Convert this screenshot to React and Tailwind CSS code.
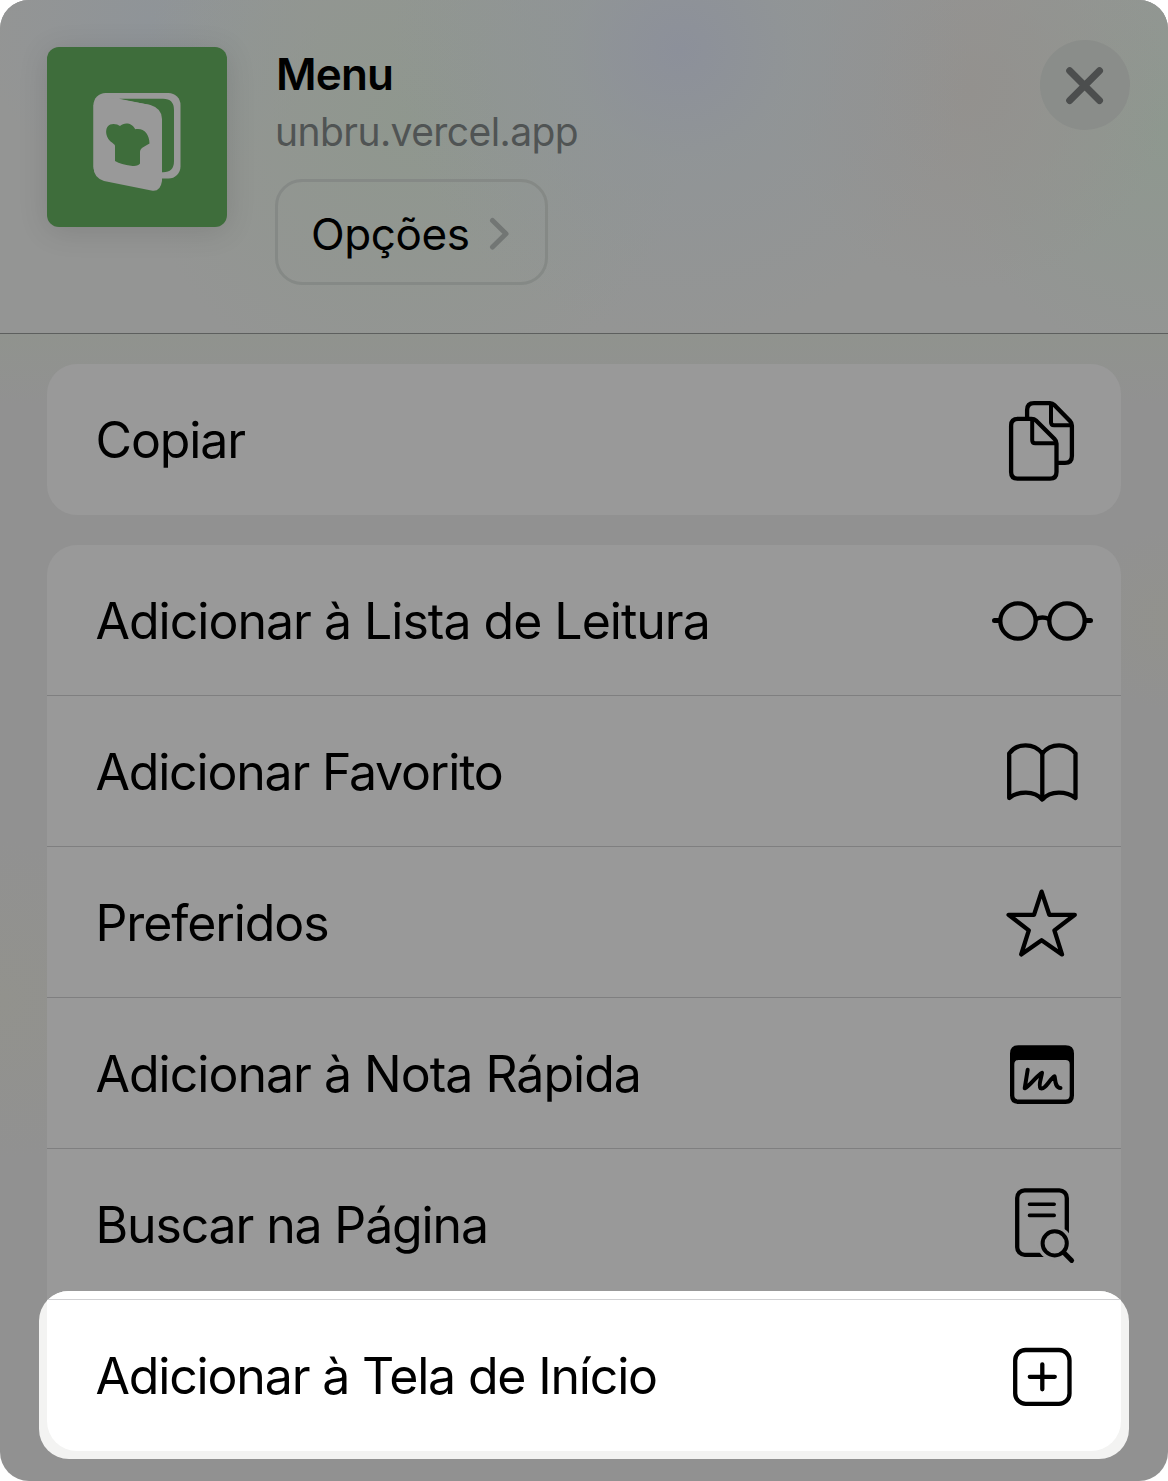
const Icon = ({ top, children }) => (
  <svg
    className="h-[150px] w-[104px] shrink-0"
    viewBox={`990 ${top} 104 150`}
    fill="none"
    stroke="#000"
    strokeWidth="4.3"
    strokeLinecap="round"
    strokeLinejoin="round"
  >
    {children}
  </svg>
);

const CopyIcon = () => (
  <Icon top={364}>
    <g strokeLinecap="butt">
      <path d="M1027.1 417V410Q1027.1 403.1 1034 403.1H1050Q1052.5 403.1 1054.3 405L1070 421Q1071.9 423 1071.9 425.5V456Q1071.9 462.9 1065 462.9H1058" />
      <path d="M1051 404V422.3Q1051 425.3 1054 425.3H1071" strokeWidth="4" />
      <path d="M1018 418.8H1031.5Q1034.2 418.8 1036 420.6L1054.5 439Q1056.5 441 1056.5 443.5V472Q1056.5 478.6 1050 478.6H1017.6Q1011.1 478.6 1011.1 472V425.5Q1011.1 418.8 1018 418.8Z" />
      <path d="M1032.2 420V440.3Q1032.2 443.3 1035.2 443.3H1056" strokeWidth="4" />
    </g>
  </Icon>
);

const GlassesIcon = () => (
  <Icon top={545}>
    <circle cx="1018" cy="621" r="17.7" />
    <circle cx="1067" cy="621" r="17.7" />
    <path d="M1036 619Q1042.5 616 1049 619" />
    <path d="M994.5 620.4H999M1086.5 620.4H1090.5" strokeWidth="5" />
  </Icon>
);

const BookIcon = () => (
  <Icon top={696}>
    <path d="M1042.3 753.5C1034 742.6 1017 742.6 1009.2 753.5V798C1018 791 1034 790 1042.3 799.5C1050.6 790 1066.6 791 1075.5 798V753.5C1067.6 742.6 1050.6 742.6 1042.3 753.5Z" />
    <path d="M1042.3 753V799" />
  </Icon>
);

const StarIcon = () => (
  <Icon top={847}>
    <path d="M1041.6 891.6L1049.3 914.8H1074.8L1054.4 930.4L1062 954.4L1041.6 940.3L1021.2 954.4L1028.8 930.4L1008.6 914.8H1034Z" />
  </Icon>
);

const NoteIcon = () => (
  <Icon top={998}>
    <path
      fill="#000"
      stroke="none"
      fillRule="evenodd"
      d="M1018.5 1045.3H1065.5Q1074 1045.3 1074 1053.5V1095.5Q1074 1104 1065.5 1104H1018.5Q1010 1104 1010 1095.5V1053.5Q1010 1045.3 1018.5 1045.3ZM1018.5 1060Q1014.3 1060 1014.3 1064.2V1095.3Q1014.3 1099.5 1018.5 1099.5H1065.5Q1069.7 1099.5 1069.7 1095.3V1064.2Q1069.7 1060 1065.5 1060Z"
    />
    <path
      strokeWidth="4"
      d="M1027.7 1069.8L1024.7 1088.3C1030 1086 1037 1075 1042 1072.8C1041.5 1077 1038 1086 1040.5 1088.3C1045 1090.5 1050 1078.5 1054.5 1076.3C1055.5 1079 1054.5 1088 1060.5 1088"
    />
  </Icon>
);

const FindIcon = () => (
  <Icon top={1149}>
    <rect x="1017.2" y="1190.4" width="49.6" height="64.4" rx="7.5" />
    <circle cx="1054.7" cy="1243.4" r="15" fill="#999" stroke="#999" strokeWidth="5" />
    <path d="M1029.5 1204.2H1054.2M1029.5 1215.4H1054.2" strokeWidth="3.6" />
    <circle cx="1054.7" cy="1243.4" r="12.1" strokeWidth="4" />
    <path d="M1063.5 1252.3L1071.7 1260.5" strokeWidth="4.8" />
  </Icon>
);

const PlusIcon = () => (
  <Icon top={1300}>
    <rect x="1015.2" y="1350" width="54.3" height="53.9" rx="10.5" />
    <path d="M1029.8 1376.8H1054.8M1042.3 1364.3V1389.3" />
  </Icon>
);

const Label = ({ className, children }) => (
  <span className={`-ml-[0.5px] whitespace-nowrap pt-[2px] text-[50px] leading-[60px] ${className}`}>{children}</span>
);

const rows = [
  { text: "Adicionar à Lista de Leitura", icon: GlassesIcon, spacing: "tracking-[-1px]" },
  { text: "Adicionar Favorito", icon: BookIcon, spacing: "tracking-[-1.2px]" },
  { text: "Preferidos", icon: StarIcon, spacing: "tracking-[-1.1px]" },
  { text: "Adicionar à Nota Rápida", icon: NoteIcon, spacing: "tracking-[-1px]" },
  { text: "Buscar na Página", icon: FindIcon, spacing: "tracking-[-1.15px]" },
];

const AppLogo = () => (
  <svg
    className="size-[180px] shrink-0 rounded-[12px] bg-[#3e6d3b] shadow-[0_4px_30px_rgba(0,0,0,0.12)]"
    viewBox="47 47 180 180"
  >
    <rect x="93.5" y="93" width="87" height="85.5" rx="12" fill="#999" />
    <path fill="#3e6d3b" d="M119 98.7H163Q174 98.7 174 110V161Q174 172.3 163 172.3H150V105Z" />
    <path
      fill="#999"
      d="M93.5 105Q96 97 119 99.3L150.5 105Q162 108.5 162 119V181Q160.5 191.5 152.5 190.7L104 181Q93.5 177.5 93.5 167Z"
    />
    <path
      fill="#3e6d3b"
      d="M115 161V146.5Q115 144.5 112 142.5C104.5 137.5 103.5 124 113.5 124Q117.5 124 120 126C124 122 132 122.3 135.3 129.2C143.5 127.5 149.5 134 149.5 143.5L143.5 147Q140 149 140 152V163.5Q138 166.6 131 165.7Q121.5 164.7 115 161Z"
    />
  </svg>
);

export default function App() {
  return (
    <div className="h-[1481px] w-[1168px] bg-white font-[Inter,sans-serif] text-black">
      <div className="flex h-full flex-col overflow-hidden rounded-[29px] bg-[#919191] bg-[radial-gradient(circle_at_0px_1000px,#92928d_0px,#92928d00_160px),radial-gradient(circle_at_1168px_620px,#92928d_0px,#92928d00_90px)]">
        <header className="flex h-[334px] shrink-0 items-start border-b border-[#5d5f5e] bg-[#949594] bg-[radial-gradient(circle_at_680px_50px,#8c909a_0px,#8e949899_110px,#8f969800_290px),radial-gradient(circle_at_410px_120px,#8f978e_0px,#8f978e00_280px),radial-gradient(circle_at_970px_90px,#93918e_0px,#93918e00_200px),radial-gradient(circle_at_1168px_130px,#8e988f_0px,#8e988f00_230px),radial-gradient(circle_at_150px_20px,#8f9498_0px,#8f949800_170px)] pl-[47px] pr-[38px]">
          <div className="pt-[47px]">
            <AppLogo />
          </div>
          <div className="ml-[48px] flex grow flex-col items-start pt-[47px]">
            <h1 className="pl-px text-[44px] font-semibold leading-[54px] tracking-[-0.8px]">Menu</h1>
            <p className="mt-[7px] text-[39px] leading-[48px] tracking-[-0.57px] text-[#505454]">unbru.vercel.app</p>
            <button className="mt-[23px] flex h-[106px] w-[273px] items-center rounded-[27px] border-[3px] border-[#858986] pl-[33px] pt-[4px]">
              <span className="w-[158px] whitespace-nowrap text-[44px] leading-[54px] tracking-[-0.4px]">Opções</span>
              <svg className="ml-[18px] h-[34px] w-[24px]" viewBox="487 218 24 34" fill="none" stroke="#727674" strokeWidth="5" strokeLinecap="round" strokeLinejoin="round">
                <path d="M492.5 221.5L506 234.7L492.5 248" />
              </svg>
            </button>
          </div>
          <button className="mt-[40px] flex size-[90px] items-center justify-center rounded-full bg-[#8a8d8a]">
            <svg className="size-[44px]" viewBox="0 0 44 44" stroke="#4c4e4e" strokeWidth="7" strokeLinecap="round">
              <path d="M6.7 7.7L36.5 37.5M36.5 7.7L6.7 37.5" />
            </svg>
          </button>
        </header>

        <main className="flex grow flex-col gap-[30px] bg-[linear-gradient(#90938e_0px,#90938e00_70px)] px-[47px] pt-[30px]">
          <section className="flex h-[151px] items-start justify-between rounded-[30px] bg-[#999] pl-[49px] pr-[27px]">
            <div className="flex h-[150px] items-center">
              <Label className="tracking-[-1.1px]">Copiar</Label>
            </div>
            <CopyIcon />
          </section>

          <section className="rounded-[30px] bg-[#999]">
            {rows.map(({ text, icon: RowIcon, spacing }, i) => (
              <div
                key={text}
                className={`flex items-center justify-between pl-[49px] pr-[27px] ${i ? "h-[151px] border-t border-[#7f7f80]" : "h-[150px]"}`}
              >
                <Label className={spacing}>{text}</Label>
                <RowIcon />
              </div>
            ))}
            <div className="relative h-[152px]">
              <div className="absolute -inset-x-2 -bottom-2 -top-2 overflow-hidden rounded-[30px] bg-[#f3f3f2] px-2 pb-2">
                <div className="h-full rounded-b-[30px] bg-white pt-2">
                  <div className="flex h-[151px] items-center justify-between border-t border-[#d1d1d3] pl-[49px] pr-[27px]">
                    <Label className="tracking-[-1.17px]">Adicionar à Tela de Início</Label>
                    <PlusIcon />
                  </div>
                </div>
              </div>
            </div>
          </section>
        </main>
      </div>
    </div>
  );
}
